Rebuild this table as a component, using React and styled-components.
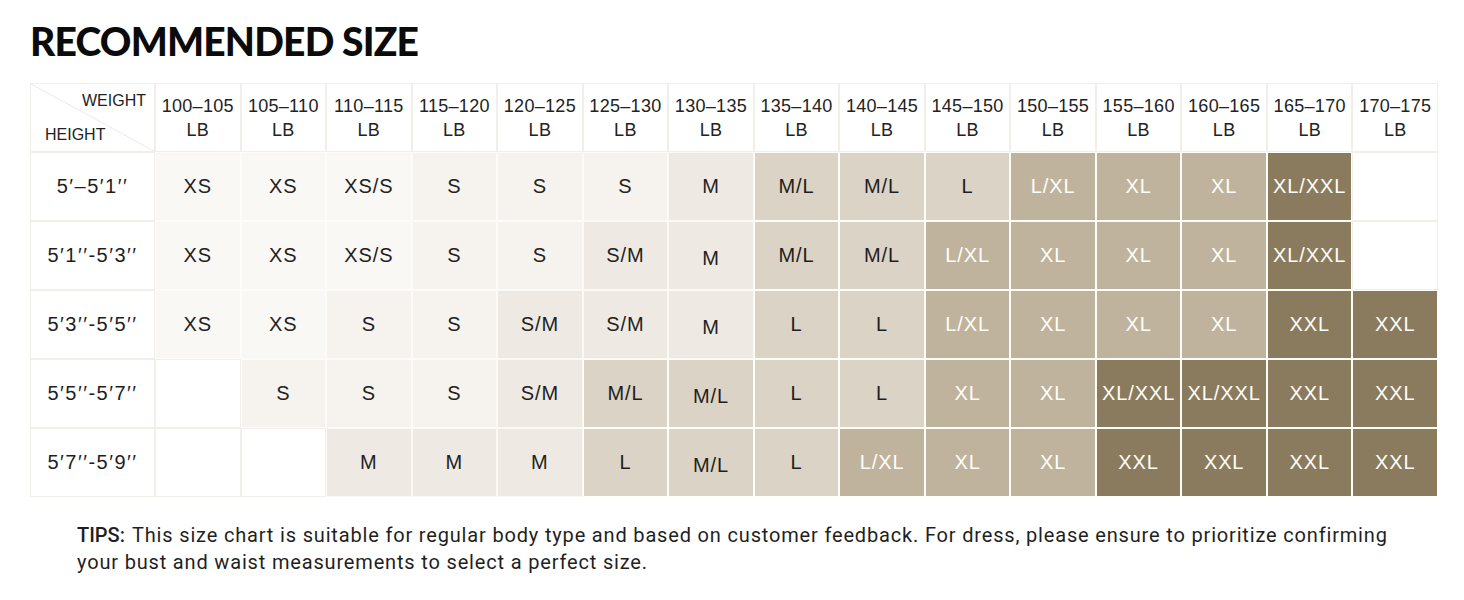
import React from "react";
import styled, { createGlobalStyle } from "styled-components";

const Global = createGlobalStyle`
  html, body { margin: 0; padding: 0; background: #ffffff; }
  body { font-family: "Liberation Sans", Arial, sans-serif; color: #222; }
`;

const Page = styled.div`
  width: 1464px;
  height: 600px;
  box-sizing: border-box;
  padding: 20px 26px 0 30px;
  overflow: hidden;
`;

const Title = styled.h1`
  margin: 0;
  font-family: Lato, "Liberation Sans", sans-serif;
  font-weight: 900;
  font-size: 39px;
  line-height: 42px;
  letter-spacing: -0.8px;
  color: #0b0b0b;
`;

const Grid = styled.div`
  margin-top: 21px;
  width: 1408px;
  display: grid;
  grid-template-columns: 125px repeat(15, 1fr);
  grid-auto-rows: 69px;
`;

const BaseCell = styled.div`
  box-sizing: border-box;
  display: flex;
  align-items: center;
  justify-content: center;
  text-align: center;
`;

const Corner = styled(BaseCell)`
  flex-direction: column;
  align-items: stretch;
  justify-content: space-between;
  padding: 8px 8px 7px 14px;
  border: 1px solid #f2efea;
  background: linear-gradient(
    to top right,
    #ffffff calc(50% - 0.8px),
    #ebe7e1 50%,
    #ffffff calc(50% + 0.8px)
  );
  font-size: 16px;
  line-height: 18px;
  color: #222;
`;

const CornerLabel = styled.span`
  align-self: ${(p) => (p.$end ? "flex-end" : "flex-start")};
`;

const HeadCell = styled(BaseCell)`
  flex-direction: column;
  border: 1px solid #f2efea;
  background: #fff;
  font-size: 18px;
  line-height: 24px;
  letter-spacing: 0.3px;
  color: #222;
  padding-top: 1px;
`;

const HeightCell = styled(BaseCell)`
  border: 1px solid #f2efea;
  background: #fff;
  font-size: 20px;
  letter-spacing: 1.5px;
  color: #1e1e1e;
`;

const LEVELS = {
  0: { bg: "#ffffff", fg: "#222222", line: "#f2efea" },
  1: { bg: "#faf8f5", fg: "#222222", line: "#fdfcfa" },
  2: { bg: "#f6f3ee", fg: "#222222", line: "#fcfbf8" },
  3: { bg: "#eeeae3", fg: "#222222", line: "#fbf9f5" },
  4: { bg: "#dbd3c5", fg: "#1e1e1e", line: "#fffdf8" },
  5: { bg: "#bfb39e", fg: "#fffdf7", line: "#fffdf8" },
  6: { bg: "#8a7a5e", fg: "#fffdf7", line: "#fffdf8" },
};

const SizeCell = styled(BaseCell)`
  border: 1px solid ${(p) => LEVELS[p.$level].line};
  background: ${(p) => LEVELS[p.$level].bg};
  color: ${(p) => LEVELS[p.$level].fg};
  font-size: 20px;
  letter-spacing: 0.9px;
  padding-top: ${(p) => (p.$low ? "6px" : "0")};
`;

const Tips = styled.p`
  margin: 25px 0 0 47px;
  width: 1330px;
  font-family: Roboto, "Liberation Sans", sans-serif;
  font-size: 20px;
  line-height: 27px;
  letter-spacing: 0.83px;
  color: #1f1f1f;
`;

const TipsLabel = styled.span`
  font-weight: 500;
  letter-spacing: 0;
  margin-right: 7px;
`;

const weights = [
  "100–105", "105–110", "110–115", "115–120", "120–125", "125–130", "130–135",
  "135–140", "140–145", "145–150", "150–155", "155–160", "160–165", "165–170", "170–175",
];

const rows = [
  {
    h: "5′–5′1′′",
    c: [
      ["XS", 1], ["XS", 1], ["XS/S", 1], ["S", 2], ["S", 2], ["S", 2], ["M", 3],
      ["M/L", 4], ["M/L", 4], ["L", 4], ["L/XL", 5], ["XL", 5], ["XL", 5], ["XL/XXL", 6], ["", 0],
    ],
  },
  {
    h: "5′1′′-5′3′′",
    c: [
      ["XS", 1], ["XS", 1], ["XS/S", 1], ["S", 2], ["S", 2], ["S/M", 3], ["M", 3, true],
      ["M/L", 4], ["M/L", 4], ["L/XL", 5], ["XL", 5], ["XL", 5], ["XL", 5], ["XL/XXL", 6], ["", 0],
    ],
  },
  {
    h: "5′3′′-5′5′′",
    c: [
      ["XS", 1], ["XS", 1], ["S", 2], ["S", 2], ["S/M", 3], ["S/M", 3], ["M", 3, true],
      ["L", 4], ["L", 4], ["L/XL", 5], ["XL", 5], ["XL", 5], ["XL", 5], ["XXL", 6], ["XXL", 6],
    ],
  },
  {
    h: "5′5′′-5′7′′",
    c: [
      ["", 0], ["S", 2], ["S", 2], ["S", 2], ["S/M", 3], ["M/L", 4], ["M/L", 4, true],
      ["L", 4], ["L", 4], ["XL", 5], ["XL", 5], ["XL/XXL", 6], ["XL/XXL", 6], ["XXL", 6], ["XXL", 6],
    ],
  },
  {
    h: "5′7′′-5′9′′",
    c: [
      ["", 0], ["", 0], ["M", 3], ["M", 3], ["M", 3], ["L", 4], ["M/L", 4, true],
      ["L", 4], ["L/XL", 5], ["XL", 5], ["XL", 5], ["XXL", 6], ["XXL", 6], ["XXL", 6], ["XXL", 6],
    ],
  },
];

export default function App() {
  return (
    <>
      <Global />
      <Page>
        <Title>RECOMMENDED SIZE</Title>
        <Grid>
          <Corner>
            <CornerLabel $end>WEIGHT</CornerLabel>
            <CornerLabel>HEIGHT</CornerLabel>
          </Corner>
          {weights.map((w) => (
            <HeadCell key={w}>
              <span>{w}</span>
              <span>LB</span>
            </HeadCell>
          ))}
          {rows.map((r) => (
            <React.Fragment key={r.h}>
              <HeightCell>{r.h}</HeightCell>
              {r.c.map(([label, level, low], i) => (
                <SizeCell key={i} $level={level} $low={low}>
                  {label}
                </SizeCell>
              ))}
            </React.Fragment>
          ))}
        </Grid>
        <Tips>
          <TipsLabel>TIPS:</TipsLabel>This size chart is suitable for regular body type and based on
          customer feedback. For dress, please ensure to prioritize confirming your bust and waist
          measurements to select a perfect size.
        </Tips>
      </Page>
    </>
  );
}
